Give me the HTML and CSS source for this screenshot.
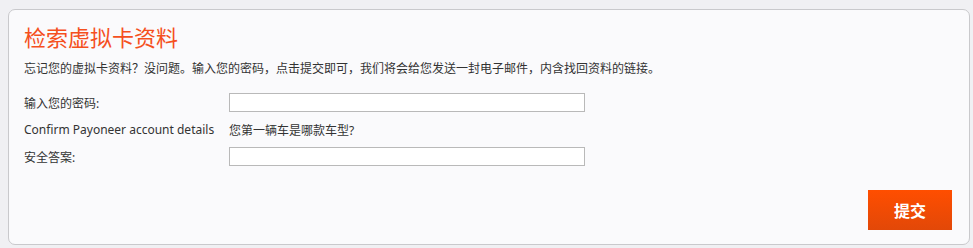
FILE: index.html
```html
<!DOCTYPE html>
<html lang="zh">
<head>
    <meta charset="UTF-8">
    <title>检索虚拟卡资料</title>
    <link rel="stylesheet" href="styles.css">
</head>
<body>
    <div class="panel">
        <h1>检索虚拟卡资料</h1>
        <p class="intro">忘记您的虚拟卡资料？没问题。输入您的密码，点击提交即可，我们将会给您发送一封电子邮件，内含找回资料的链接。</p>

        <div class="form-row">
            <label for="password">输入您的密码:</label>
            <input type="password" id="password">
        </div>
        <div class="form-row">
            <label>Confirm Payoneer account details</label>
            <span class="question">您第一辆车是哪款车型?</span>
        </div>
        <div class="form-row">
            <label for="answer">安全答案:</label>
            <input type="text" id="answer">
        </div>

        <div class="actions">
            <button class="submit">提交</button>
        </div>
    </div>
</body>
</html>
```

FILE: styles.css
```css
body {
    margin: 0;
    padding: 9px 3px 6px 8px;
    background-color: #f0f0f3;
    font-family: "Noto Sans", "Noto Sans CJK SC", sans-serif;
    font-size: 12px;
    color: #333;
}
.panel {
    background-color: #fafafc;
    border: 1px solid #c9c9cc;
    border-radius: 7px;
    padding: 11px 17px 14px 15px;
}
.panel h1 {
    margin: 0;
    font-family: "Noto Sans CJK SC", sans-serif;
    font-size: 22px;
    font-weight: normal;
    line-height: 30px;
    color: #f5501e;
}
.intro {
    margin: 9px 0 11px;
    line-height: 18px;
}
.form-row {
    display: flex;
    align-items: center;
    height: 27px;
}
.form-row label {
    width: 205px;
}
.form-row input {
    width: 352px;
    height: 15px;
    padding: 1px;
    border: 1px solid #b9b9b9;
    background: #fff;
}
.actions {
    display: flex;
    justify-content: flex-end;
    margin-top: 20px;
}
.submit {
    width: 84px;
    height: 40px;
    border: none;
    background: linear-gradient(#ff4e00, #e24808);
    color: #fff;
    font-family: "Noto Sans CJK SC", sans-serif;
    font-size: 16px;
    font-weight: bold;
    cursor: pointer;
}
```
